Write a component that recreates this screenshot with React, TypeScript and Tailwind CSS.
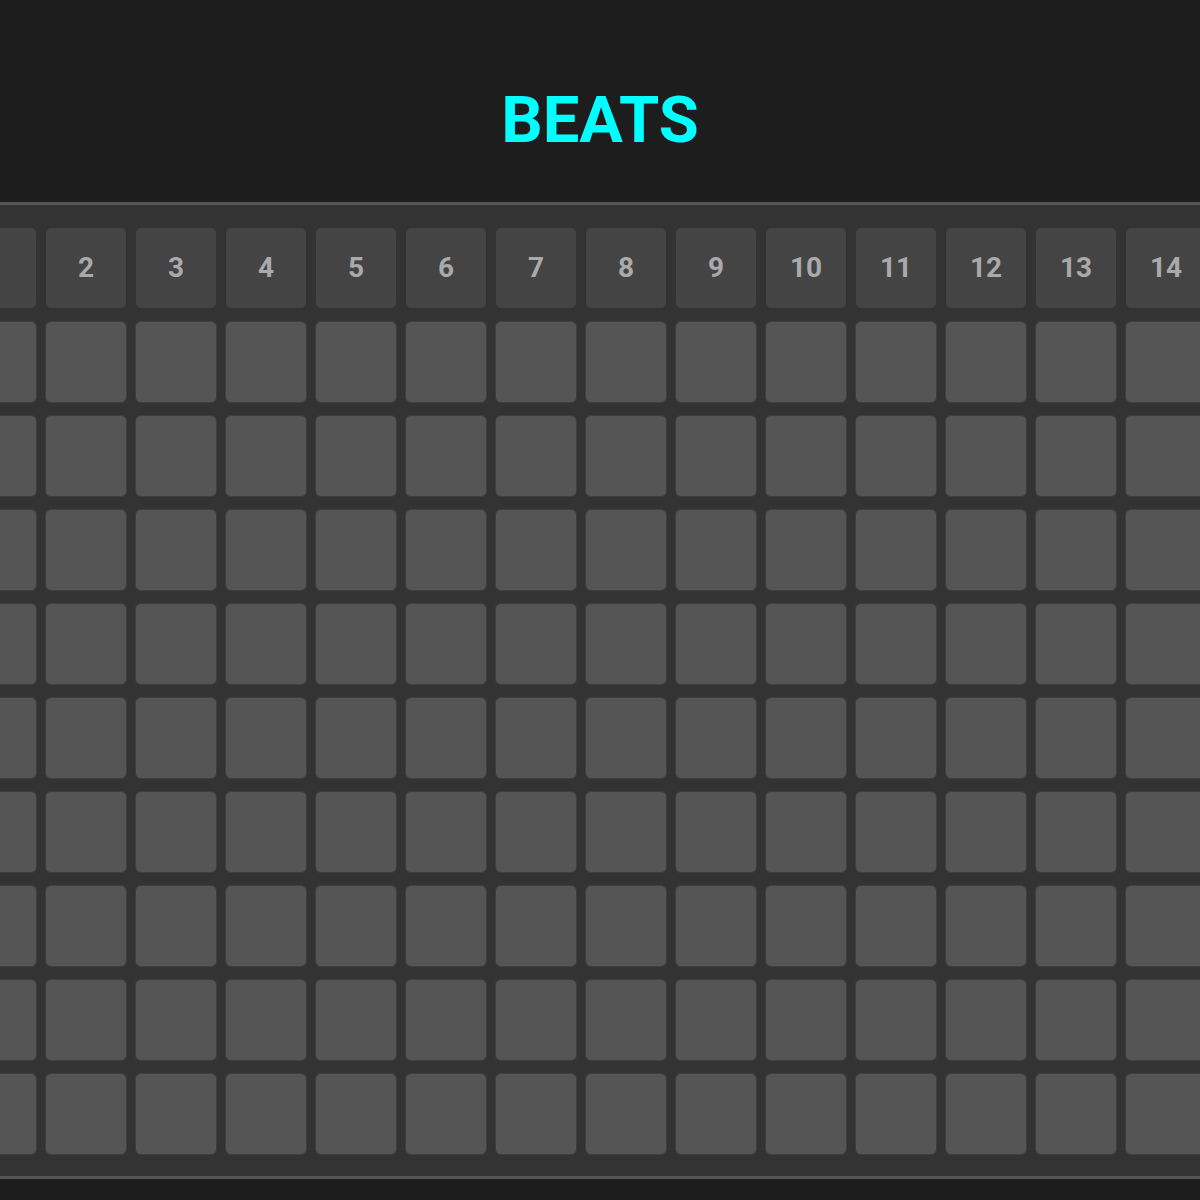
const STEPS = Array.from({ length: 16 }, (_, i) => i + 1)
const ROWS = Array.from({ length: 9 }, (_, i) => i)

export default function App() {
  return (
    <div className="min-h-[1200px] bg-[#1d1d1d] font-['Roboto',sans-serif]">
      <header className="flex h-[202px] items-center justify-center pt-[38px]">
        <h1 className="text-[65px] font-bold leading-none text-[#00ffff]">BEATS</h1>
      </header>

      <section className="overflow-hidden border-y-[3px] border-[#555] bg-[#333] pb-[21px] pt-[23px]">
        <div className="ml-[-45px] flex flex-col">
          {/* step numbers */}
          <div className="mb-[13px] flex gap-2">
            {STEPS.map((n) => (
              <div key={n} className="flex w-[82px] shrink-0 justify-center">
                <div className="flex h-20 w-20 items-center justify-center rounded-[5px] bg-[#444] text-[28px] font-bold text-[#aaa]">
                  {n}
                </div>
              </div>
            ))}
          </div>

          {/* pads */}
          <div className="flex flex-col gap-3">
            {ROWS.map((r) => (
              <div key={r} className="flex gap-2">
                {STEPS.map((n) => (
                  <button
                    key={n}
                    className="h-[82px] w-[82px] shrink-0 rounded-[6px] border border-[#3e3e3e] bg-[#555]"
                  />
                ))}
              </div>
            ))}
          </div>
        </div>
      </section>
    </div>
  )
}
